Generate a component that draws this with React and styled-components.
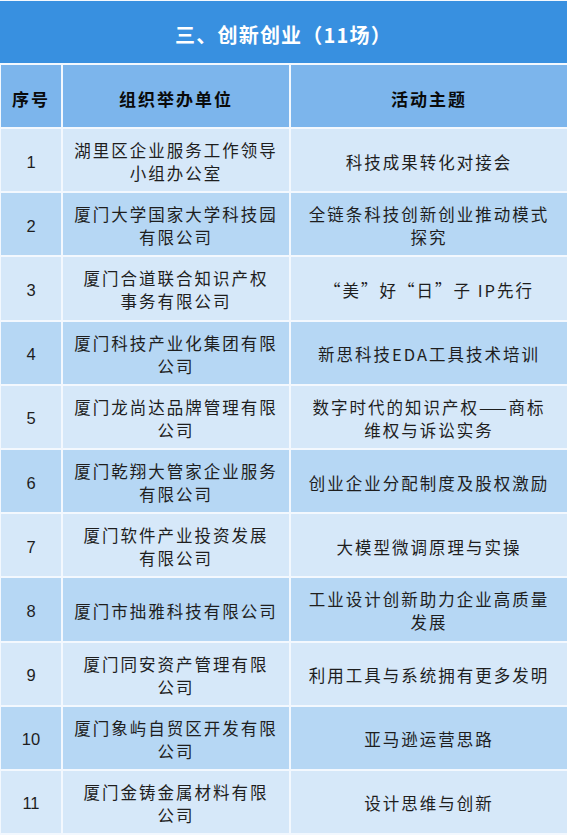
import React from "react";
import styled, { createGlobalStyle } from "styled-components";

const rows = [
  { org: ["湖里区企业服务工作领导", "小组办公室"], topic: ["科技成果转化对接会"] },
  { org: ["厦门大学国家大学科技园", "有限公司"], topic: ["全链条科技创新创业推动模式", "探究"] },
  { org: ["厦门合道联合知识产权", "事务有限公司"], topic: ["“美”好“日”子 IP先行"] },
  { org: ["厦门科技产业化集团有限", "公司"], topic: ["新思科技EDA工具技术培训"] },
  { org: ["厦门龙尚达品牌管理有限", "公司"], topic: ["数字时代的知识产权——商标", "维权与诉讼实务"] },
  { org: ["厦门乾翔大管家企业服务", "有限公司"], topic: ["创业企业分配制度及股权激励"] },
  { org: ["厦门软件产业投资发展", "有限公司"], topic: ["大模型微调原理与实操"] },
  { org: ["厦门市拙雅科技有限公司"], topic: ["工业设计创新助力企业高质量", "发展"] },
  { org: ["厦门同安资产管理有限", "公司"], topic: ["利用工具与系统拥有更多发明"] },
  { org: ["厦门象屿自贸区开发有限", "公司"], topic: ["亚马逊运营思路"] },
  { org: ["厦门金铸金属材料有限", "公司"], topic: ["设计思维与创新"] },
];

function App() {
  return (
    <>
      <GlobalStyle />
      <Table>
        <Title>三、创新创业（11场）</Title>
        <HeadCell>序号</HeadCell>
        <HeadCell>组织举办单位</HeadCell>
        <HeadCell>活动主题</HeadCell>
        {rows.map((row, i) => (
          <React.Fragment key={i}>
            <NumCell dark={i % 2 === 1}>{i + 1}</NumCell>
            <Cell dark={i % 2 === 1}>
              {row.org.map((line) => (
                <Line key={line}>{line}</Line>
              ))}
            </Cell>
            <Cell dark={i % 2 === 1}>
              {row.topic.map((line) => (
                <Line key={line}>{line}</Line>
              ))}
            </Cell>
          </React.Fragment>
        ))}
      </Table>
    </>
  );
}

const GlobalStyle = createGlobalStyle`
  body {
    margin: 0;
    background: #ffffff;
    font-family: "Noto Sans CJK SC", "Liberation Sans", sans-serif;
  }
`;

const Table = styled.div`
  display: grid;
  grid-template-columns: 60px 226px 276px;
  grid-template-rows: 62px 62px;
  grid-auto-rows: 62.2px;
  gap: 2px;
  padding: 1px 3px 2px 1px;
  width: 567px;
  box-sizing: border-box;
  background: #f3f8fe;
`;

const Title = styled.div`
  grid-column: 1 / -1;
  margin-left: -1px;
  background-color: #3890e0;
  color: #ffffff;
  font-size: 20px;
  font-weight: 700;
  letter-spacing: 1.2px;
  display: flex;
  align-items: center;
  justify-content: center;
  padding-top: 5px;
  box-sizing: border-box;
`;

const HeadCell = styled.div`
  background-color: #7cb5ec;
  color: #0a0a0a;
  font-size: 17px;
  font-weight: 700;
  letter-spacing: 2px;
  display: flex;
  align-items: center;
  justify-content: center;
  padding-top: 4px;
  box-sizing: border-box;
`;

const Cell = styled.div`
  background-color: ${(props) => (props.dark ? "#b6d7f4" : "#d6e8f9")};
  color: #1e1e1e;
  font-size: 16.5px;
  line-height: 23px;
  letter-spacing: 2px;
  display: flex;
  flex-direction: column;
  align-items: center;
  justify-content: center;
  padding-top: 4px;
  box-sizing: border-box;
`;

const Line = styled.span`
  white-space: nowrap;
`;

const NumCell = styled(Cell)`
  font-family: "Liberation Sans", sans-serif;
  font-size: 16.5px;
  letter-spacing: 0;
`;

export default App;
